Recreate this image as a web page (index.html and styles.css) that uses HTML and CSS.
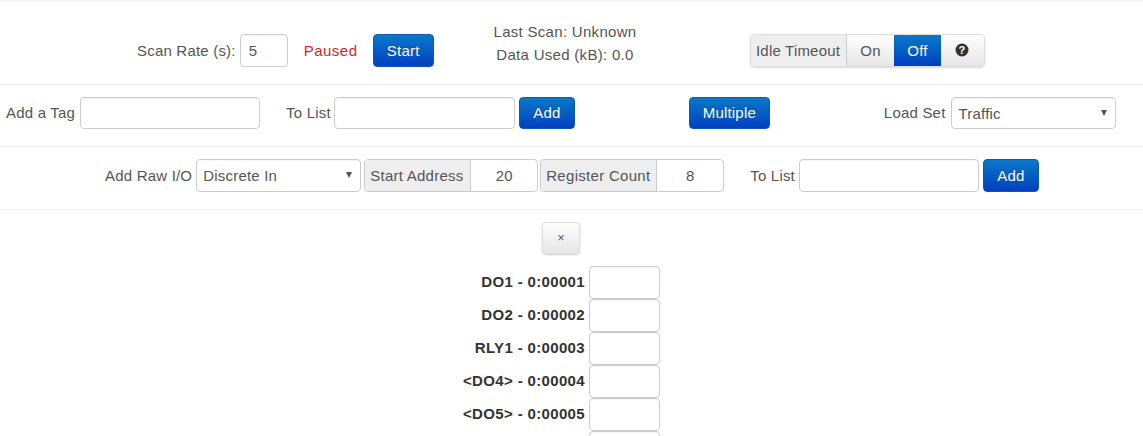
FILE: index.html
```html
<!DOCTYPE html>
<html>
<head>
<meta charset="utf-8">
<title>Scan</title>
<link rel="stylesheet" href="styles.css">
</head>
<body>
<section class="row row-scan">
  <div class="scan-left">
    <label class="lbl">Scan Rate (s):</label>
    <input class="ctl rate" value="5">
    <span class="paused">Paused</span>
    <button class="btn start">Start</button>
  </div>
  <div class="status">
    <div>Last Scan: Unknown</div>
    <div>Data Used (kB): 0.0</div>
  </div>
  <div class="group idle">
    <span class="addon idle-label">Idle Timeout</span>
    <span class="seg seg-on">On</span>
    <span class="seg seg-off">Off</span>
    <span class="seg seg-help">
      <svg class="help-icon" width="14" height="14" viewBox="0 0 14 14"><circle cx="7" cy="7" r="6.5" fill="#333"/><text x="7" y="10.6" text-anchor="middle" class="qmark">?</text></svg>
    </span>
  </div>
</section>
<section class="row row-tag">
  <label class="lbl">Add a Tag</label>
  <input class="ctl tag">
  <label class="lbl to-list">To List</label>
  <input class="ctl list">
  <button class="btn add">Add</button>
  <button class="btn multiple">Multiple</button>
  <label class="lbl load">Load Set</label>
  <div class="ctl sel sel-load"><span>Traffic</span><i class="caret"></i></div>
</section>
<section class="row row-raw">
  <label class="lbl">Add Raw I/O</label>
  <div class="ctl sel sel-raw"><span>Discrete In</span><i class="caret"></i></div>
  <div class="group start-addr"><span class="addon">Start Address</span><span class="val">20</span></div>
  <div class="group count"><span class="addon">Register Count</span><span class="val">8</span></div>
  <label class="lbl to-list2">To List</label>
  <input class="ctl list2">
  <button class="btn add">Add</button>
</section>
<main class="regs">
  <button class="close">×</button>
  <div class="reg"><b>DO1 - 0:00001</b><input class="ctl cell"></div>
  <div class="reg"><b>DO2 - 0:00002</b><input class="ctl cell"></div>
  <div class="reg"><b>RLY1 - 0:00003</b><input class="ctl cell"></div>
  <div class="reg"><b>&lt;DO4&gt; - 0:00004</b><input class="ctl cell"></div>
  <div class="reg"><b>&lt;DO5&gt; - 0:00005</b><input class="ctl cell"></div>
  <div class="reg"><b></b><input class="ctl cell"></div>
</main>
</body>
</html>
```
FILE: styles.css
```css
* { box-sizing: border-box; }
html { height: 100%; overflow: hidden; }
body {
  margin: 0;
  height: 436px;
  overflow: hidden;
  background: #fff;
  border-top: 2px solid #f5f5f5;
  font-family: "Liberation Sans", Arial, sans-serif;
  font-size: 15px;
  letter-spacing: 0.2px;
  color: #555;
}
.row {
  display: flex;
  align-items: center;
  border-bottom: 1px solid #eee;
}
.row-scan { height: 83px; padding: 15px 0 0 137px; }
.row-tag { height: 62px; padding: 0 0 6px 6px; }
.row-raw { height: 63px; padding: 0 0 6px 105px; }
.lbl { color: #555; white-space: nowrap; }
.ctl {
  display: block;
  height: 33px;
  background: #fff;
  border: 1px solid #ccc;
  border-radius: 4px;
  font: inherit;
  letter-spacing: inherit;
  color: #555;
  padding: 0 6px;
  box-shadow: inset 0 1px 1px rgba(0,0,0,.04);
}
.btn {
  height: 33px;
  padding: 0;
  border: 1px solid #0b5cad;
  border-radius: 4px;
  background: linear-gradient(#0a78c8, #0040c0);
  color: #fff;
  font: inherit;
  letter-spacing: inherit;
  text-shadow: 0 -1px 0 rgba(0,0,0,.2);
}
.scan-left { display: flex; align-items: center; width: 297px; flex: none; }
.rate { width: 48px; margin-left: 4px; padding-left: 8px; }
.paused { color: #e01b1b; margin-left: 16px; width: 53px; letter-spacing: 0.5px; }
.start { margin-left: 16px; width: 61px; }
.status {
  width: 262px;
  flex: none;
  text-align: center;
  line-height: 23px;
  margin-top: -16px;
  letter-spacing: 0.3px;
}
.group { display: flex; flex: none; height: 33px; border: 1px solid #ccc; border-radius: 4px; overflow: hidden; }
.addon { background: #eee; color: #555; padding: 0 5px; display: flex; align-items: center; white-space: nowrap; }
.idle { width: 235px; margin-left: 54px; border-color: #ddd; box-shadow: 0 1px 2px rgba(0,0,0,.15); }
.idle-label { width: 96px; border-right: 1px solid #ccc; }
.seg {
  display: flex;
  align-items: center;
  justify-content: center;
  background: linear-gradient(#fff, #e6e6e6);
  color: #555;
}
.seg-on { width: 47px; }
.seg-off { width: 47px; background: linear-gradient(#0a78c8, #0040c0); color: #fff; }
.seg-help { flex: 1; }
.help-icon { margin: -2px 2px 0 0; }
.qmark { font: 700 11px "Liberation Sans", sans-serif; fill: #fff; }
.row-tag .ctl, .row-tag .btn { height: 32px; }
.tag { width: 180px; margin-left: 5px; }
.to-list { margin-left: 26px; }
.list { width: 181px; margin-left: 3px; }
.add { width: 56px; margin-left: 4px; }
.multiple { width: 81px; margin-left: 114px; }
.load { margin-left: 114px; }
.sel {
  display: flex;
  align-items: center;
  justify-content: space-between;
  flex: none;
  margin-left: 4px;
  padding: 0 8px 0 7px;
}
.sel span { padding-top: 1px; }
.sel-load { width: 165px; margin-left: 5px; }
.sel-raw { width: 165px; padding-left: 6px; }
.caret {
  width: 0;
  height: 0;
  border-left: 3px solid transparent;
  border-right: 3px solid transparent;
  border-top: 6px solid #555;
}
.start-addr { width: 174px; margin-left: 3px; }
.count { width: 184px; margin-left: 2px; }
.start-addr .addon { width: 106px; border-right: 1px solid #ccc; letter-spacing: 0.25px; }
.count .addon { width: 116px; border-right: 1px solid #ccc; letter-spacing: 0.3px; }
.val { flex: 1; display: flex; align-items: center; justify-content: center; }
.to-list2 { margin-left: 26px; }
.list2 { width: 180px; margin-left: 4px; }
.regs { display: flex; flex-direction: column; align-items: center; padding-top: 12px; }
.close {
  width: 38px;
  height: 32px;
  margin: 0 21px 12px 0;
  border: 1px solid #ddd;
  border-radius: 4px;
  background: linear-gradient(#fff, #e6e6e6);
  box-shadow: 0 1px 2px rgba(0,0,0,.2);
  color: #555;
  font: 12px "Liberation Sans", sans-serif;
}
.reg { display: flex; align-items: center; height: 33px; width: 100%; }
.reg b { width: 585px; text-align: right; color: #333; white-space: nowrap; letter-spacing: 0.35px; margin-top: -2px; }
.cell { width: 71px; height: 33px; margin-left: 4px; }
```
